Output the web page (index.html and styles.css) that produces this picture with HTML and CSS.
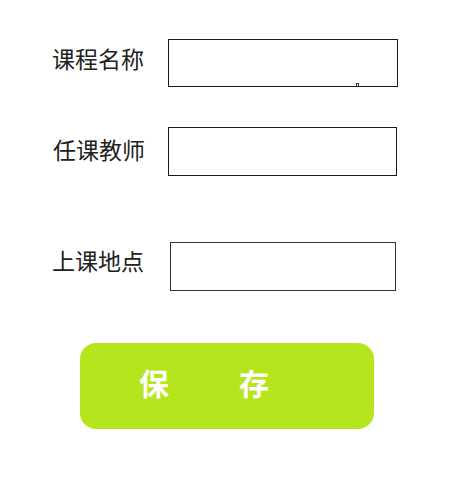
FILE: index.html
```html
<!DOCTYPE html>
<html lang="zh-CN">
<head>
<meta charset="utf-8">
<title>课程信息</title>
<link rel="stylesheet" href="styles.css">
</head>
<body>
<form class="form">
  <div class="row row-1">
    <label class="label label-1">课程名称</label>
    <div class="box box-1"><span class="mark"></span></div>
  </div>
  <div class="row row-2">
    <label class="label label-2">任课教师</label>
    <div class="box box-2"></div>
  </div>
  <div class="row row-3">
    <label class="label label-3">上课地点</label>
    <div class="box box-3"></div>
  </div>
  <button type="button" class="save"><span>保</span><span>存</span></button>
</form>
</body>
</html>
```

FILE: styles.css
```css
html, body {
  margin: 0;
  padding: 0;
  background: #ffffff;
}
body {
  width: 469px;
  height: 493px;
  overflow: hidden;
  font-family: "Noto Sans CJK SC", "Microsoft YaHei", sans-serif;
}
.form {
  display: flex;
  flex-direction: column;
  align-items: flex-start;
  padding-top: 39px;
}
.row {
  display: flex;
  align-items: flex-start;
}
.row-2 { margin-top: 40px; }
.row-3 { margin-top: 66px; }
.label {
  font-size: 23px;
  line-height: 23px;
  color: #222;
  white-space: nowrap;
}
.label-1 { margin: 8px 0 0 52px; width: 116px; }
.label-2 { margin: 11px 0 0 53px; width: 115px; }
.label-3 { margin: 7px 0 0 52px; width: 118px; }
.box {
  position: relative;
  box-sizing: border-box;
  border: 1px solid #1a1a1a;
  background: #fff;
}
.box-1 { width: 230px; height: 48px; }
.box-2 { width: 229px; height: 49px; }
.box-3 { width: 226px; height: 49px; border-color: #333; }
.mark {
  position: absolute;
  left: 187px;
  bottom: 0;
  width: 3px;
  height: 3px;
  box-sizing: border-box;
  border: 1px solid #333;
  border-bottom: none;
}
.save {
  margin: 52px 0 0 80px;
  width: 294px;
  height: 86px;
  border: none;
  border-radius: 16px;
  background: #b5e61d;
  color: #fff;
  font-family: "Noto Sans CJK SC", "Microsoft YaHei", sans-serif;
  font-weight: 700;
  font-size: 30px;
  line-height: 1;
  display: flex;
  align-items: center;
  justify-content: flex-start;
  padding: 0 0 8px 59px;
  gap: 70px;
  box-sizing: border-box;
  cursor: pointer;
}
```
